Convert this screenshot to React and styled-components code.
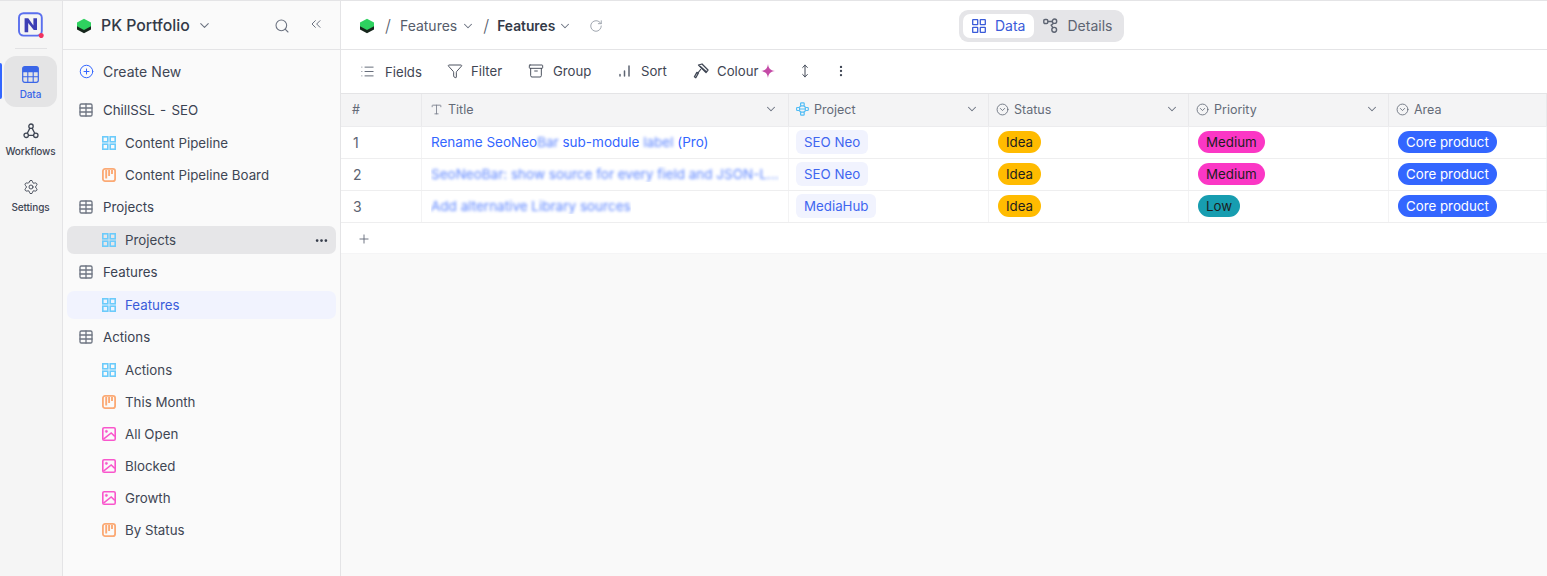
import React from "react";
import styled, { createGlobalStyle } from "styled-components";
import { ChevronDown, ChevronsLeft, CirclePlus, CircleChevronDown, EllipsisVertical, Ellipsis, Funnel, Archive, List, MoveVertical, Plus, RotateCw, Search, Settings, Table, Type } from "lucide-react";

const Global = createGlobalStyle`
  html, body { margin: 0; padding: 0; height: 100%; background: #fff; }
  body { font-family: Inter, "Noto Sans", sans-serif; color: #3a4252; overflow: hidden; }
  * { box-sizing: border-box; }
`;

const Page = styled.div`
  width: 1547px; height: 576px; display: flex; border-top: 1px solid #e4e4e6; overflow: hidden;
`;
const Rail = styled.nav`
  width: 63px; flex: none; background: #f5f5f5; border-right: 1px solid #e4e4e6;
  display: flex; flex-direction: column; align-items: center; position: relative;
`;
const RailLogo = styled.div`
  width: 32px; height: 48px; display: flex; align-items: center; justify-content: center;
  border-bottom: 1px solid #e2e2e4; margin-bottom: 7px; flex: none;
`;
const RailItem = styled.div`
  width: 53px; height: ${p => (p.$active ? "51px" : "56px")}; border-radius: 12px; flex: none; margin-left: -1px;
  background: ${p => (p.$active ? "#e4e4e5" : "transparent")};
  color: ${p => (p.$active ? "#3a66e8" : "#3f4654")};
  display: flex; flex-direction: column; align-items: center; justify-content: flex-start;
  padding-top: ${p => (p.$active ? "10px" : "16px")}; gap: ${p => (p.$active ? "5px" : "6px")};
  font-size: 10px; font-weight: 500; line-height: 12px; letter-spacing: -0.1px;
`;
const RailMarker = styled.div`
  position: absolute; left: 0; top: 62px; width: 2px; height: 36px; background: #3366ff; border-radius: 0 2px 2px 0;
`;

const Sidebar = styled.aside`
  width: 278px; flex: none; background: #fafafa; border-right: 1px solid #e4e4e6; display: flex; flex-direction: column;
`;
const SideHead = styled.header`
  height: 49px; flex: none; border-bottom: 1px solid #e4e4e6; display: flex; align-items: center;
  padding: 1px 16px 0 13px; color: #3a4252;
`;
const Workspace = styled.div`
  font-size: 15.8px; font-weight: 500; margin-left: 9px; color: #333a48; line-height: 20px;
`;
const HeadChevron = styled.span`
  display: flex; margin-left: 7px; color: #6b7280; flex: 1;
`;
const HeadIcon = styled.span`
  display: flex; color: #6b7280; margin-left: ${p => p.$gap || 0}px; margin-top: ${p => (p.$up ? "-3px" : "0")};
`;
const Tree = styled.div`
  display: flex; flex-direction: column; padding: 5px 4px 0;
`;
const CreateRow = styled.div`
  height: 32px; display: flex; align-items: center; gap: 9px; padding-left: 12px; font-size: 14px; color: #3f4654; letter-spacing: 0.05px; margin-bottom: 7px;
`;
const GroupRow = styled.div`
  height: 32px; display: flex; align-items: center; gap: 10px; padding-left: 12px; font-size: 13.3px; color: #3a4252; word-spacing: 1.5px;
`;
const ChildList = styled.div`
  display: flex; flex-direction: column; padding-top: 1px;
`;
const ChildCell = styled.div`
  height: 32px; display: flex; align-items: center;
`;
const ChildRow = styled.div`
  flex: 1; height: 28px; display: flex; align-items: center; gap: 9px; padding: 0 7px 0 35px; border-radius: 7px; font-size: 13.3px;
  background: ${p => (p.$state === "active" ? "#f1f3fe" : p.$state === "hover" ? "#e6e6e8" : "transparent")};
  color: ${p => (p.$state === "active" ? "#3a5bd9" : "#3f4654")};
`;
const RowLabel = styled.span`flex: 1;`;

const Main = styled.main`
  flex: 1; min-width: 0; display: flex; flex-direction: column; background: #f9f9f9;
`;
const TopBar = styled.header`
  height: 49px; flex: none; background: #fff; border-bottom: 1px solid #e4e4e6; position: relative;
  display: flex; align-items: center; padding: 1px 0 0 18px; font-size: 14px; color: #565d6b;
`;
const Slash = styled.span`
  font-size: 17px; color: #565d6b; margin: 0 ${p => p.$r}px 0 ${p => p.$l}px; font-weight: 300;
`;
const Crumb = styled.span`
  font-weight: ${p => (p.$strong ? 600 : 400)}; color: ${p => (p.$strong ? "#333a48" : "#565d6b")}; font-size: ${p => (p.$strong ? "13.8px" : "14px")};
`;
const CrumbChevron = styled.span`
  display: flex; margin-left: ${p => p.$l || 4}px; color: #6b7280;
`;
const Refresh = styled.span`
  display: flex; margin-left: 17px; color: #9aa0aa;
`;
const Segmented = styled.div`
  position: absolute; left: 618px; top: 9px; height: 32px; width: 165px; border-radius: 9px; background: #e5e5e8;
  display: flex; align-items: center; padding: 0 4px; gap: 0;
`;
const Segment = styled.div`
  height: 24px; display: flex; align-items: center; gap: 9px; border-radius: 7px; padding: 0 9px 1px;
  background: ${p => (p.$on ? "#fff" : "transparent")}; color: ${p => (p.$on ? "#3a5bd9" : "#5d6472")}; font-size: 14px;
`;
const ToolBar = styled.div`
  height: 44px; flex: none; background: #fff; border-bottom: 1px solid #e4e4e6; display: flex; align-items: center; padding-left: 19px; color: #3f4654; font-size: 13.2px;
`;
const Tool = styled.div`
  display: flex; align-items: center; gap: ${p => p.$gap || 8}px; width: ${p => p.$w}px; flex: none; transform: translateY(${p => p.$dy || 0}px);
`;
const ColourLabel = styled.span`margin-left: 5px;`;
const GridTable = styled.div`
  flex: none; display: flex; flex-direction: column; background: #fff;
`;
const HeadRow = styled.div`
  display: grid; grid-template-columns: 81px 367px 200px 200px 200px 1fr; height: 33px; background: #f4f4f5; border-bottom: 1px solid #ececee;
`;
const HeadCell = styled.div`
  display: flex; align-items: center; gap: 5px; padding: 0 ${p => p.$right || 9}px 2px ${p => p.$pad || 7}px; border-right: 1px solid #e9e9eb; color: #646b78; font-size: 12.5px;
`;
const HeadLabel = styled.span`flex: 1;`;
const Row = styled.div`
  display: grid; grid-template-columns: 81px 367px 200px 200px 200px 1fr; height: 32px; border-bottom: 1px solid #eeeeef;
`;
const Cell = styled.div`
  display: flex; align-items: center; padding: 0 0 1px ${p => p.$pad || 9}px; border-right: 1px solid #f3f3f4; font-size: 13.3px; min-width: 0; white-space: pre;
`;
const NumCell = styled(Cell)`color: #5d6472; padding-left: 12px; font-size: 14px;`;
const TitleText = styled.span`
  color: #3366ff; font-size: 13.5px; overflow: hidden; text-overflow: ellipsis; white-space: pre;
`;
const Blur = styled.span`
  filter: blur(${p => p.$r}px); opacity: 0.8; display: inline-block;
`;
const ProjectTag = styled.span`
  height: 24px; border-radius: 6px; background: #f1f3fe; color: #3f66f0; padding: 0 8px; display: inline-flex; align-items: center; margin-left: -1px;
`;
const Pill = styled.span`
  height: 22px; border-radius: 11px; padding: 0 8px; display: inline-flex; align-items: center; background: ${p => p.$bg}; color: ${p => p.$fg || "#1d1d1f"};
`;
const AddRow = styled.div`
  height: 31px; display: flex; align-items: center; padding: 1px 0 0 16px; color: #5d6472; border-bottom: 1px solid #f5f5f6;
`;

const Hex = ({ size = 16 }) => (
  <svg width={size} height={size} viewBox="0 0 16 16">
    <path d="M8 3.5 15 7.3V11.5L8 15.3 1 11.5V7.3Z" fill="#16261c" />
    <path d="M8 .8 15 4.4V8.2L8 12 1 8.2V4.4Z" fill="#2ed15f" />
  </svg>
);
const NLogo = () => (
  <svg width="26" height="26" viewBox="0 0 26 26">
    <rect x="1" y="1.2" width="22.8" height="22.4" rx="4.5" fill="none" stroke="#5a6fee" strokeWidth="1.9" />
    <path d="M6.6 20.2V6.2h3.7L15.4 13.6V6.2h3.6V18h-3.2L10.2 11v9.2Z" fill="#3d3fb5" />
    <circle cx="23.2" cy="23.6" r="2.5" fill="#f0325f" />
  </svg>
);
const DataIcon = () => (
  <svg width="17" height="17" viewBox="0 0 17 17">
    <rect x=".7" y=".7" width="15.6" height="15.6" rx="2" fill="none" stroke="#3a66e8" strokeWidth="1.2" />
    <rect x=".7" y=".7" width="15.6" height="4.5" rx="1.5" fill="#3a66e8" />
    <path d="M.7 5.6h15.6M.7 10.8h15.6M5.8 5v11.3M11.2 5v11.3" stroke="#3a66e8" strokeWidth="1.1" />
  </svg>
);
const WorkflowIcon = () => (
  <svg width="16" height="16" viewBox="0 0 16 16" fill="none" stroke="#3f4654" strokeWidth="1.3">
    <circle cx="8" cy="3.2" r="2.2" /><circle cx="3.2" cy="12.3" r="2.2" /><circle cx="12.8" cy="12.3" r="2.2" />
    <path d="M6.9 5.1 4.3 10.3M9.1 5.1l2.6 5.2M5.4 12.3h5.2" />
  </svg>
);
const GridViewIcon = () => (
  <svg width="14" height="14" viewBox="0 0 14 14" fill="none" stroke="#6ccbfb" strokeWidth="1.6" style={{ flex: "none" }}>
    <rect x=".8" y=".8" width="5" height="5" /><rect x="8.2" y=".8" width="5" height="5" />
    <rect x=".8" y="8.2" width="5" height="5" /><rect x="8.2" y="8.2" width="5" height="5" />
  </svg>
);
const DataSegIcon = () => (
  <svg width="14" height="14" viewBox="0 0 14 14" fill="none" stroke="#3a5bd9" strokeWidth="1.3">
    <rect x=".7" y=".7" width="5" height="5" rx=".4" /><rect x="8.3" y=".7" width="5" height="5" rx=".4" />
    <rect x=".7" y="8.3" width="5" height="5" rx=".4" /><rect x="8.3" y="8.3" width="5" height="5" rx=".4" />
  </svg>
);
const BoardIcon = () => (
  <svg width="14" height="14" viewBox="0 0 14 14" fill="none" stroke="#fba974" style={{ flex: "none" }}>
    <rect x=".9" y=".9" width="12.2" height="12.2" rx="2.2" strokeWidth="1.8" />
    <path d="M4.2 2v8.5M7.1 2v6M10 2v4" strokeWidth="1.9" />
  </svg>
);
const PicIcon = () => (
  <svg width="14" height="14" viewBox="0 0 14 14" fill="none" stroke="#f956cc" style={{ flex: "none" }}>
    <rect x=".8" y=".8" width="12.4" height="12.4" rx="1.3" strokeWidth="1.6" />
    <circle cx="4.4" cy="4.4" r="1.1" fill="#f956cc" strokeWidth=".6" />
    <path d="M1.5 12.2 9.2 6l3.6 3.4" strokeWidth="1.5" />
  </svg>
);
const GroupIcon = () => <Table size={16} color="#6f7683" strokeWidth={2} style={{ flex: "none", margin: "0 -1px" }} />;
const SortBars = () => (
  <svg width="15" height="15" viewBox="0 0 15 15" stroke="#5d6472" strokeWidth="1.5" strokeLinecap="round" fill="none">
    <path d="M3 13v-1.5M7.5 13V8M12 13V3" />
  </svg>
);
const ColourIcon = () => (
  <svg width="16" height="16" viewBox="0 0 16 16" fill="none" stroke="#3f4654" strokeWidth="1.3" strokeLinejoin="round">
    <path d="M5.5 2 9 1l6 6-2 2.5Z" />
    <path d="M7 3.2 13 8.6" />
    <path d="M8 6 4.6 10.4" strokeWidth="1.1" />
    <path d="M5.3 10.3 2.8 14.8 1.4 13.8 3.9 9.4Z" />
  </svg>
);
const Sparkle = () => (
  <svg width="14" height="14" viewBox="0 0 14 14"><path d="M7 0C7.5 4 9 6.2 14 7 9 7.8 7.5 10 7 14 6.5 10 5 7.8 0 7 5 6.2 6.5 4 7 0Z" fill="#c44aa6" /></svg>
);
const DetailsIcon = () => (
  <svg width="15" height="15" viewBox="0 0 15 15" fill="none" stroke="#5d6472" strokeWidth="1.4">
    <rect x=".8" y="1.5" width="4" height="4" rx="1.2" /><circle cx="11.5" cy="3.2" r="2.2" /><circle cx="11.2" cy="11.8" r="2.4" />
    <path d="M4.8 3.5h4.5M10.6 5.2 8.2 7.2l2 3" />
  </svg>
);
const LinkIcon = () => (
  <svg width="13" height="14" viewBox="0 0 13 14" fill="none" stroke="#53bdf5" strokeWidth="1.2" style={{ flex: "none" }}>
    <rect x="4.6" y=".8" width="3.6" height="3" rx=".8" /><rect x="4.6" y="10.2" width="3.6" height="3" rx=".8" />
    <rect x=".6" y="5.5" width="3" height="3" rx=".8" /><rect x="9.3" y="5.5" width="3" height="3" rx=".8" />
    <path d="M3.6 7h5.7M5 3.8 3.2 5.5M7.8 3.8l1.8 1.7M5 10.2 3.2 8.5M7.8 10.2l1.8-1.7" />
  </svg>
);

const Chev = ({ s = 14, c = "#6b7280" }) => <ChevronDown size={s} color={c} strokeWidth={1.8} />;
const ChoiceIcon = () => <CircleChevronDown size={13} color="#666d7a" strokeWidth={1.6} style={{ flex: "none" }} />;

const tree = [
  { name: "ChillSSL - SEO", kids: [["Content Pipeline", "grid"], ["Content Pipeline Board", "board"]] },
  { name: "Projects", kids: [["Projects", "grid", "hover"]] },
  { name: "Features", kids: [["Features", "grid", "active"]] },
  { name: "Actions", kids: [["Actions", "grid"], ["This Month", "board"], ["All Open", "pic"], ["Blocked", "pic"], ["Growth", "pic"], ["By Status", "board"]] },
];
const viewIcon = { grid: <GridViewIcon />, board: <BoardIcon />, pic: <PicIcon /> };

const rows = [
  { n: 1, title: <>Rename SeoNeo<Blur $r={1.5}>Bar</Blur> sub-module <Blur $r={1.5}>label</Blur> (Pro)</>, project: "SEO Neo", pr: "Medium" },
  { n: 2, title: <Blur $r={1.5}>SeoNeoBar: show source for every field and JSON-L...</Blur>, project: "SEO Neo", pr: "Medium" },
  { n: 3, title: <Blur $r={1.5}>Add alternative Library sources</Blur>, project: "MediaHub", pr: "Low" },
];
const prColor = { Medium: "#fb37c5", Low: "#179db0" };

export default function App() {
  return (
    <>
      <Global />
      <Page>
        <Rail>
          <RailLogo><NLogo /></RailLogo>
          <RailMarker />
          <RailItem $active><DataIcon />Data</RailItem>
          <RailItem><WorkflowIcon />Workflows</RailItem>
          <RailItem><Settings size={16} color="#3f4654" strokeWidth={1.4} />Settings</RailItem>
        </Rail>
        <Sidebar>
          <SideHead>
            <Hex />
            <Workspace>PK Portfolio</Workspace>
            <HeadChevron><ChevronDown size={15} strokeWidth={1.7} /></HeadChevron>
            <HeadIcon><Search size={16} strokeWidth={1.6} /></HeadIcon>
            <HeadIcon $gap={18} $up><ChevronsLeft size={16} strokeWidth={1.5} /></HeadIcon>
          </SideHead>
          <Tree>
            <CreateRow><CirclePlus size={15} color="#3366ff" strokeWidth={1.6} />Create New</CreateRow>
            {tree.map(g => (
              <div key={g.name}>
                <GroupRow><GroupIcon />{g.name}</GroupRow>
                <ChildList>
                  {g.kids.map(([label, icon, state]) => (
                    <ChildCell key={label}>
                      <ChildRow $state={state}>
                        {viewIcon[icon]}
                        <RowLabel>{label}</RowLabel>
                        {state === "hover" && <Ellipsis size={15} color="#333a48" strokeWidth={2.4} />}
                      </ChildRow>
                    </ChildCell>
                  ))}
                </ChildList>
              </div>
            ))}
          </Tree>
        </Sidebar>
        <Main>
          <TopBar>
            <Hex />
            <Slash $l={10} $r={9}>/</Slash>
            <Crumb>Features</Crumb>
            <CrumbChevron><Chev /></CrumbChevron>
            <Slash $l={8} $r={8}>/</Slash>
            <Crumb $strong>Features</Crumb>
            <CrumbChevron $l={3}><Chev /></CrumbChevron>
            <Refresh><RotateCw size={14} strokeWidth={1.6} /></Refresh>
            <Segmented>
              <Segment $on><DataSegIcon />Data</Segment>
              <Segment><DetailsIcon />Details</Segment>
            </Segmented>
          </TopBar>
          <ToolBar>
            <Tool $w={87} $gap={10}><List size={15} color="#5d6472" strokeWidth={1.5} />Fields</Tool>
            <Tool $w={81} $dy={-1}><Funnel size={16} color="#3f4654" strokeWidth={1.4} />Filter</Tool>
            <Tool $w={89} $gap={9} $dy={-1}><Archive size={16} color="#3f4654" strokeWidth={1.4} />Group</Tool>
            <Tool $w={76} $gap={9} $dy={-1}><SortBars />Sort</Tool>
            <Tool $w={105} $gap={3} $dy={-1}><ColourIcon /><ColourLabel>Colour</ColourLabel><Sparkle /></Tool>
            <Tool $w={36} $dy={-1}><MoveVertical size={14} color="#3f4654" strokeWidth={1.7} /></Tool>
            <Tool $w={20} $dy={-1}><EllipsisVertical size={14} color="#3f4654" strokeWidth={2} /></Tool>
          </ToolBar>
          <GridTable>
            <HeadRow>
              <HeadCell $pad={11}>#</HeadCell>
              <HeadCell $pad={8} $right={10}><Type size={13} color="#7a808c" strokeWidth={1.6} /><HeadLabel>Title</HeadLabel><Chev /></HeadCell>
              <HeadCell><LinkIcon /><HeadLabel>Project</HeadLabel><Chev /></HeadCell>
              <HeadCell><ChoiceIcon /><HeadLabel>Status</HeadLabel><Chev /></HeadCell>
              <HeadCell><ChoiceIcon /><HeadLabel>Priority</HeadLabel><Chev /></HeadCell>
              <HeadCell><ChoiceIcon /><HeadLabel>Area</HeadLabel></HeadCell>
            </HeadRow>
            {rows.map(r => (
              <Row key={r.n}>
                <NumCell>{r.n}</NumCell>
                <Cell><TitleText>{r.title}</TitleText></Cell>
                <Cell $pad={8}><ProjectTag>{r.project}</ProjectTag></Cell>
                <Cell><Pill $bg="#ffbb00">Idea</Pill></Cell>
                <Cell><Pill $bg={prColor[r.pr]}>{r.pr}</Pill></Cell>
                <Cell><Pill $bg="#3366ff" $fg="#fff">Core product</Pill></Cell>
              </Row>
            ))}
            <AddRow><Plus size={14} strokeWidth={1.5} /></AddRow>
          </GridTable>
        </Main>
      </Page>
    </>
  );
}
